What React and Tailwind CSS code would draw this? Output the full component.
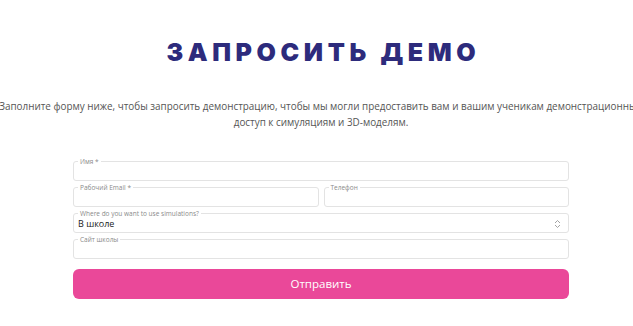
import React from "react";

function Field({ label, className = "", children }) {
  return (
    <fieldset className={`border border-[#e3e3e3] rounded-[3px] px-[5px] min-w-0 ${className}`}>
      <legend className="text-[6.5px] leading-[7px] text-[#8a8a8a] px-[2px] ml-[-1px]">{label}</legend>
      {children}
    </fieldset>
  );
}

export default function App() {
  return (
    <div className="w-full overflow-hidden bg-white" style={{ fontFamily: '"Open Sans", "Noto Sans", sans-serif' }}>
      <div className="w-[642px] flex flex-col items-center">
        <h1
          className="mt-[37px] text-[25px] leading-[30px] font-black text-[#2d2b7c] tracking-[4.6px] pl-[4.6px]"
          style={{ fontFamily: 'Inter, sans-serif' }}
        >
          ЗАПРОСИТЬ ДЕМО
        </h1>
        <p className="mt-[31px] w-[660px] shrink-0 text-center text-[9.9px] leading-[16px] text-[#555555]">
          Заполните форму ниже, чтобы запросить демонстрацию, чтобы мы могли предоставить вам и вашим ученикам демонстрационный доступ к симуляциям и 3D-моделям.
        </p>
        <form className="mt-[28px] w-[496px] flex flex-col gap-[3px]">
          <Field label="Имя *" className="h-[23px]" />
          <div className="flex gap-[5px]">
            <Field label="Рабочий Email *" className="h-[23px] flex-1" />
            <Field label="Телефон" className="h-[23px] flex-1" />
          </div>
          <Field label="Where do you want to use simulations?" className="h-[23px]">
            <div className="flex items-center justify-between h-[14px]">
              <span className="text-[9px] text-[#222] -ml-[1px]">В школе</span>
              <svg width="7" height="10" viewBox="0 0 7 10" className="mr-[2px]">
                <path d="M1 4 L3.5 1.5 L6 4" fill="none" stroke="#999" strokeWidth="0.9" />
                <path d="M1 6 L3.5 8.5 L6 6" fill="none" stroke="#999" strokeWidth="0.9" />
              </svg>
            </div>
          </Field>
          <Field label="Сайт школы" className="h-[23px]" />
          <button type="button" className="mt-[7px] h-[30px] rounded-[6px] bg-[#ea4899] text-white text-[11.5px]">
            Отправить
          </button>
        </form>
      </div>
    </div>
  );
}
